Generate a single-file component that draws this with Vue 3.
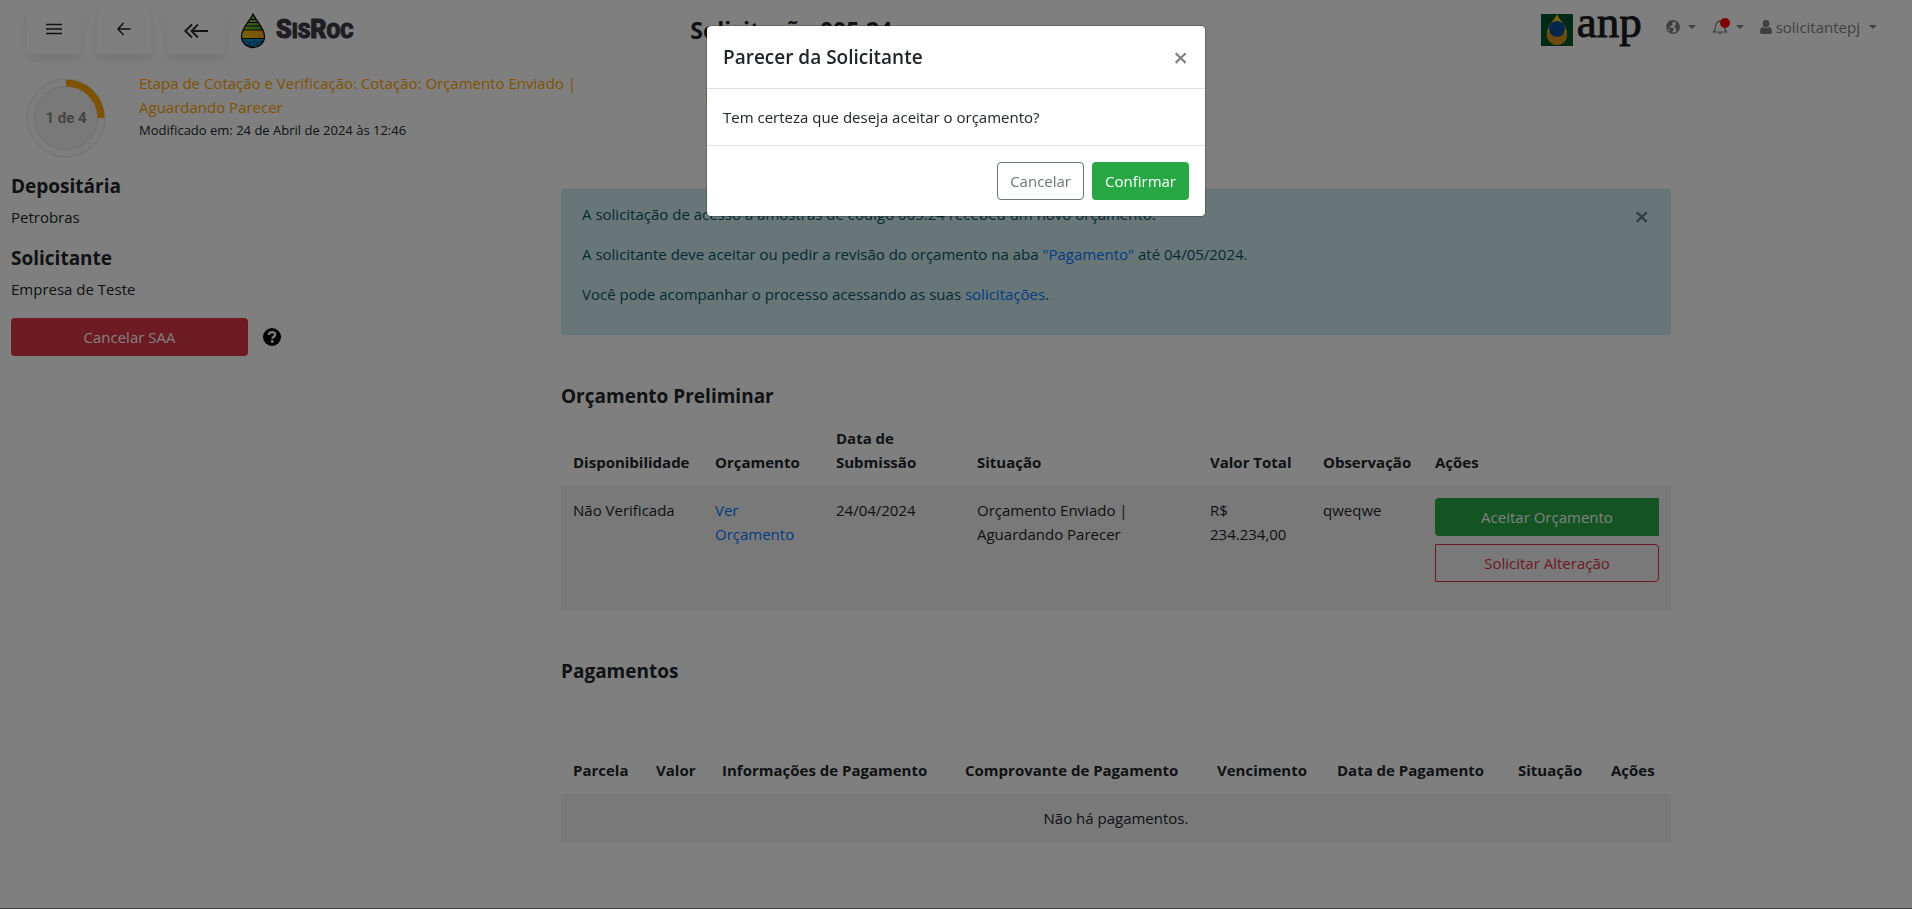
<script setup>
import { ref } from 'vue'

const modalOpen = ref(true)
const alertOpen = ref(true)

const budgetColumns = [
  { label: 'Disponibilidade', width: 142 },
  { label: 'Orçamento', width: 121 },
  { label: 'Data de Submissão', width: 141 },
  { label: 'Situação', width: 233 },
  { label: 'Valor Total', width: 113 },
  { label: 'Observação', width: 112 },
  { label: 'Ações', width: 248 },
]

const paymentColumns = [
  { label: 'Parcela', width: 83 },
  { label: 'Valor', width: 66 },
  { label: 'Informações de Pagamento', width: 243 },
  { label: 'Comprovante de Pagamento', width: 252 },
  { label: 'Vencimento', width: 120 },
  { label: 'Data de Pagamento', width: 181 },
  { label: 'Situação', width: 93 },
  { label: 'Ações', width: 72 },
]

const share = (width) => ({ width: (width / 1110) * 100 + '%' })
</script>

<template>
  <div class="page">
    <header class="topbar">
      <div class="topbar-left">
        <button class="nav-card" type="button" aria-label="Menu">
          <svg width="16" height="12" viewBox="0 0 16 12"><path d="M0 1.500h16M0 6h16M0 10.500h16" stroke="#212529" stroke-width="1.500" /></svg>
        </button>
        <button class="nav-card" type="button" aria-label="Voltar">
          <svg width="14" height="14" viewBox="0 0 14 14"><path d="M13.500 7H1M6.500 1L1 7l5.500 6" fill="none" stroke="#212529" stroke-width="1.500" /></svg>
        </button>
        <button class="nav-card wide" type="button" aria-label="Voltar ao início">
          <svg width="24" height="16" viewBox="0 0 24 16"><path d="M24 8H7.500M14 1.500L7.500 8l6.500 6.500M8 1.500L1.300 8 8 14.500" fill="none" stroke="#212529" stroke-width="1.800" /></svg>
        </button>
        <a class="brand" href="#" aria-label="SisRoc">
          <svg width="26" height="36" viewBox="0 0 26 36">
            <defs>
              <clipPath id="drop"><path d="M13 1C10 8 1.500 15 1.500 23.500a11.500 11 0 0 0 23 0C24.500 15 16 8 13 1z" /></clipPath>
              <linearGradient id="leaf" x1="0" x2="1"><stop offset="0" stop-color="#a6c81e" /><stop offset="1" stop-color="#2f9a3c" /></linearGradient>
              <linearGradient id="sand" x1="0" x2="1"><stop offset="0" stop-color="#f2cc0c" /><stop offset="1" stop-color="#f09a0a" /></linearGradient>
            </defs>
            <g clip-path="url(#drop)">
              <path fill="url(#leaf)" d="M0 0h26v17H0z" />
              <path fill="url(#sand)" d="M0 17h26v9H0z" />
              <path fill="#118ec6" d="M0 26h26v10H0z" />
              <path d="M0 6.500h26M0 9.500h26M0 13h26M0 17h26M0 25.500h26" stroke="#111" stroke-width="1.200" />
              <path d="M0 29q2 2 4 0t4 0 4 0 4 0 4 0 4 0M2 32q2 2 4 0t4 0 4 0 4 0 4 0" fill="none" stroke="#0b3c6b" />
            </g>
            <path d="M13 1C10 8 1.500 15 1.500 23.500a11.500 11 0 0 0 23 0C24.500 15 16 8 13 1z" fill="none" stroke="#111" stroke-width="1.300" />
          </svg>
          <span class="brand-name">S<small>IS</small>R<small>OC</small></span>
        </a>
      </div>
      <h1 class="page-title">Solicitação 005.24</h1>
      <nav class="topbar-right">
        <a class="anp" href="#" aria-label="anp">
          <svg width="32" height="32" viewBox="0 0 32 32">
            <path fill="#00532c" d="M0 0h32v32H0z" />
            <path fill="#f3d40c" d="M16 0C14 6 6 11 6 20.500a10 10.500 0 0 0 20 0C26 11 18 6 16 0z" />
            <path fill="#d9931a" d="M6 18.500v2a10 10.500 0 0 0 20 0v-2z" />
            <circle cx="16" cy="15" r="8" fill="#0b4d99" />
          </svg>
          <span class="anp-name">anp</span>
        </a>
        <button class="nav-item globe" type="button" aria-label="Idioma">
          <svg width="14" height="14" viewBox="0 0 14 14"><circle cx="7" cy="7" r="6.200" fill="#fff" stroke="currentColor" stroke-width="1.400" /><path fill="currentColor" d="M1 4.500L2.500 2l3-1.300L7.500 2 6 3.500l.8 1.200L5 6l-1.500.2L4.500 7.500 7 8l1 1.500-1.500 1.700L6 13.300 4 12.500 3.500 9.500 1 7zM8.500 1L12 3l1.300 3.500-.8 3-1.800 2.300-.7-3.300L8.300 7.300 8.800 5l1.500-.8z" /></svg>
          <i class="caret"></i>
        </button>
        <button class="nav-item bell" type="button" aria-label="Notificações">
          <span class="bell-icon">
            <svg width="16" height="16" viewBox="0 0 16 16"><path d="M1.500 13c1.700-1.800 2-3.500 2.200-6C3.900 4 5.500 2.300 8 2.300S12.100 4 12.300 7c.2 2.500.5 4.200 2.200 6z" fill="none" stroke="currentColor" stroke-width="1.200" /><path d="M6.300 13.500a1.700 1.700 0 0 0 3.400 0zM7.200 1h1.600v1.500H7.200z" fill="currentColor" /></svg>
            <b class="dot"></b>
          </span>
          <i class="caret"></i>
        </button>
        <button class="nav-item user" type="button">
          <svg width="12" height="14" viewBox="0 0 12 14"><path fill="currentColor" d="M6 0a3.400 3.400 0 0 1 3.400 3.500C9.400 5.600 8 7.500 6 7.500S2.600 5.600 2.600 3.500A3.400 3.400 0 0 1 6 0zM3 7c1.800 1.800 4.200 1.800 6 0 2 .3 3 2.300 3 4.700 0 1.300-.9 2.300-2 2.300H2c-1.100 0-2-1-2-2.300C0 9.300 1 7.300 3 7z" /></svg>
          <span>solicitantepj</span>
          <i class="caret"></i>
        </button>
      </nav>
    </header>

    <section class="status">
      <div class="progress">
        <svg width="80" height="80" viewBox="0 0 80 80">
          <circle cx="40" cy="40" r="39" fill="#fafafa" stroke="#e2e2e2" />
          <circle cx="40" cy="40" r="31.500" fill="#f2f2f2" stroke="#e2e2e2" />
          <path d="M40 5a35 35 0 0 1 35 35" fill="none" stroke="#ffa500" stroke-width="7" />
        </svg>
        <span class="progress-label">1 de 4</span>
      </div>
      <div class="stage">
        <p class="stage-name">Etapa de Cotação e Verificação: Cotação: Orçamento Enviado | Aguardando Parecer</p>
        <p class="stage-date">Modificado em: 24 de Abril de 2024 às 12:46</p>
      </div>
      <a class="tab" href="#">Detalhes</a>
    </section>

    <div class="body">
      <aside class="side">
        <h2>Depositária</h2>
        <p>Petrobras</p>
        <h2>Solicitante</h2>
        <p>Empresa de Teste</p>
        <div class="cancel-row">
          <button class="btn danger" type="button">Cancelar SAA</button>
          <svg width="18" height="18" viewBox="0 0 18 18" role="img" aria-label="Ajuda"><circle cx="9" cy="9" r="9" fill="#000" /><path d="M5.800 7C6 5 7.200 4.200 9 4.200c1.900 0 3.200 1 3.200 2.500 0 2-2.900 2-2.900 4.100" fill="none" stroke="#fff" stroke-width="2.300" /><circle cx="9.200" cy="13.500" r="1.400" fill="#fff" /></svg>
        </div>
      </aside>

      <main class="content">
        <div v-if="alertOpen" class="alert" role="alert">
          <div class="alert-text">
            <p>A solicitação de acesso a amostras de código 005.24 recebeu um novo orçamento.</p>
            <p>A solicitante deve aceitar ou pedir a revisão do orçamento na aba <a href="#">"Pagamento"</a> até 04/05/2024.</p>
            <p>Você pode acompanhar o processo acessando as suas <a href="#">solicitações</a>.</p>
          </div>
          <button class="close" type="button" aria-label="Fechar aviso" @click="alertOpen = false">×</button>
        </div>

        <h2 class="budget-title">Orçamento Preliminar</h2>
        <table>
          <colgroup><col v-for="c in budgetColumns" :key="c.label" :style="share(c.width)" /></colgroup>
          <thead>
            <tr><th v-for="c in budgetColumns" :key="c.label" scope="col">{{ c.label }}</th></tr>
          </thead>
          <tbody>
            <tr>
              <td>Não Verificada</td>
              <td><a href="#">Ver Orçamento</a></td>
              <td>24/04/2024</td>
              <td>Orçamento Enviado | Aguardando Parecer</td>
              <td>R$ 234.234,00</td>
              <td>qweqwe</td>
              <td>
                <div class="actions">
                  <button class="btn success" type="button">Aceitar Orçamento</button>
                  <button class="btn outline-danger" type="button">Solicitar Alteração</button>
                </div>
              </td>
            </tr>
          </tbody>
        </table>

        <h2 class="payments-title">Pagamentos</h2>
        <table>
          <colgroup><col v-for="c in paymentColumns" :key="c.label" :style="share(c.width)" /></colgroup>
          <thead>
            <tr><th v-for="c in paymentColumns" :key="c.label" scope="col">{{ c.label }}</th></tr>
          </thead>
          <tbody>
            <tr><td class="empty" :colspan="paymentColumns.length">Não há pagamentos.</td></tr>
          </tbody>
        </table>
      </main>
    </div>
    <footer class="footer"></footer>

    <div v-if="modalOpen" class="backdrop">
      <div class="modal" role="dialog" aria-modal="true" aria-labelledby="modal-title">
        <div class="modal-header">
          <h5 id="modal-title">Parecer da Solicitante</h5>
          <button class="close" type="button" aria-label="Fechar" @click="modalOpen = false">×</button>
        </div>
        <div class="modal-body">Tem certeza que deseja aceitar o orçamento?</div>
        <div class="modal-footer">
          <button class="btn outline-secondary" type="button" @click="modalOpen = false">Cancelar</button>
          <button class="btn success" type="button" @click="modalOpen = false">Confirmar</button>
        </div>
      </div>
    </div>
  </div>
</template>

<style>
html,
body {
  background: #fff;
}
</style>

<style scoped>
.page,
.page * {
  box-sizing: border-box;
}
.page {
  display: flex;
  flex-direction: column;
  min-height: 100vh;
  color: #212529;
  font: 15px/24px "Segoe UI", "Open Sans", "Noto Sans", sans-serif;
}
h1,
h2,
h5,
p {
  margin: 0;
}
a {
  color: #007bff;
  text-decoration: none;
}
button {
  font: inherit;
  cursor: pointer;
}
.topbar {
  display: grid;
  grid-template-columns: 36% 1fr auto;
  height: 62px;
}
.topbar-left {
  display: flex;
  align-items: flex-start;
  gap: 16px;
  height: 62px;
  padding-left: 27px;
  overflow: hidden;
}
.nav-card {
  display: flex;
  align-items: center;
  justify-content: center;
  width: 54px;
  height: 50px;
  margin-top: 4px;
  padding: 0;
  border: 0;
  border-radius: 4px;
  background: #fff;
  box-shadow: 0 8px 12px rgba(0, 0, 0, 0.08);
}
.nav-card.wide {
  width: 58px;
  padding-top: 4px;
}
.brand {
  display: flex;
  align-items: center;
  gap: 10px;
  padding-top: 12px;
}
.brand svg {
  margin-left: -1px;
}
.brand-name {
  color: #3c3a44;
  font: 900 25px/36px "Impact", "Roboto", sans-serif;
  -webkit-text-stroke: 1px #3c3a44;
}
.brand-name small {
  font-size: 20px;
}
.page-title {
  padding: 16px 0 0 2px;
  font-size: 23px;
  line-height: 28px;
  font-weight: 700;
}
.topbar-right {
  display: flex;
  align-items: flex-start;
  padding-right: 35px;
}
.anp {
  display: flex;
  gap: 4px;
  margin-right: 24px;
  padding-top: 14px;
}
.anp-name {
  color: #1c1c22;
  font: 45px/48px "Liberation Serif", serif;
  -webkit-text-stroke: 1px #1c1c22;
  margin: -16px 0 0;
}
.nav-item {
  display: flex;
  align-items: center;
  height: 24px;
  margin-top: 15px;
  padding: 0;
  border: 0;
  background: none;
  color: #808080;
}
.globe,
.bell {
  gap: 8px;
  margin-right: 16px;
}
.bell-icon {
  position: relative;
  display: flex;
}
.dot {
  position: absolute;
  top: -1px;
  right: -2px;
  width: 10px;
  height: 10px;
  border-radius: 50%;
  background: #f00;
}
.user span {
  margin: 0 9px 0 4px;
}
.caret {
  border: 4px solid transparent;
  border-top-color: currentColor;
  border-bottom: 0;
}
.status {
  display: grid;
  grid-template-columns: 112px 1fr 64%;
  align-items: start;
  padding: 9px 0 0 27px;
  height: 100px;
}
.progress {
  position: relative;
  display: flex;
  width: 80px;
  margin: 7px 0 0 -1px;
}
.progress-label {
  position: absolute;
  inset: 0;
  color: #8a8a8a;
  font: bold 15px/80px Roboto, sans-serif;
  text-align: center;
}
.stage-name {
  color: #ffa500;
  max-width: 460px;
}
.stage-date {
  font-size: 13px;
  line-height: 22px;
}
.tab {
  color: #212529;
  padding-top: 14px;
}
.body {
  display: grid;
  grid-template-columns: 320px minmax(0, 1fr);
  flex: 1;
}
.side {
  padding: 12px 0 0 11px;
}
.side h2,
.content h2 {
  font-size: 19px;
  line-height: 24px;
  font-weight: 700;
}
.side p {
  margin: 7px 0 17px;
}
.cancel-row {
  display: flex;
  align-items: center;
  gap: 15px;
}
.cancel-row .btn {
  width: 237px;
}
.content {
  width: 100%;
  max-width: 1110px;
  margin: 0 auto;
  padding: 27px 0 64px;
}
.alert {
  display: flex;
  justify-content: space-between;
  align-items: flex-start;
  padding: 12px 20px;
  border: 1px solid #bee5eb;
  border-radius: 4px;
  background: #d1ecf1;
  color: #0c5460;
}
.alert-text p {
  margin-bottom: 16px;
}
.close {
  padding: 0;
  border: 0;
  background: none;
  color: #000;
  font-size: 26px;
  line-height: 24px;
  font-weight: 600;
  opacity: 0.5;
}
.alert .close {
  margin: 2px 1px 0 0;
}
.modal .close {
  margin-right: 1px;
}
.content .budget-title {
  margin: 49px 0 6px;
}
.content .payments-title {
  margin: 49px 0 63px;
}
table {
  width: 100%;
  table-layout: fixed;
  border-collapse: collapse;
}
th,
td {
  padding: 12px;
  text-align: left;
}
th {
  vertical-align: bottom;
  font-weight: 700;
}
td {
  background: #f2f2f2;
  vertical-align: top;
}
td.empty {
  text-align: center;
}
.actions {
  display: flex;
  flex-direction: column;
  gap: 8px;
  margin-bottom: 16px;
}
.btn {
  height: 38px;
  padding: 0 12px;
  border: 1px solid transparent;
  border-radius: 4px;
  color: #fff;
}
.danger {
  background: #dc3545;
}
.success {
  background: #28a745;
}
.outline-danger {
  border-color: #dc3545;
  background: none;
  color: #dc3545;
}
.actions .success {
  border-radius: 4px 0 0 4px;
}
.actions .outline-danger {
  border-radius: 0 4px 4px 0;
}
.outline-secondary {
  border-color: #6c757d;
  background: #fff;
  color: #6c757d;
}
.footer {
  height: 1px;
  background: #868086;
}
.backdrop {
  position: fixed;
  inset: 0;
  padding: 25px 16px;
  background: rgba(0, 0, 0, 0.5);
}
.modal {
  max-width: 500px;
  margin: 0 auto;
  border: 1px solid rgba(0, 0, 0, 0.2);
  border-radius: 5px;
  background: #fff;
  background-clip: padding-box;
}
.modal-header {
  display: flex;
  justify-content: space-between;
  align-items: center;
  padding: 16px;
  border-bottom: 1px solid #dee2e6;
}
.modal-header h5 {
  font-size: 19px;
  line-height: 30px;
  font-weight: 600;
}
.modal-body {
  padding: 16px;
}
.modal-footer {
  display: flex;
  justify-content: flex-end;
  gap: 8px;
  padding: 16px;
  border-top: 1px solid #dee2e6;
}
</style>
